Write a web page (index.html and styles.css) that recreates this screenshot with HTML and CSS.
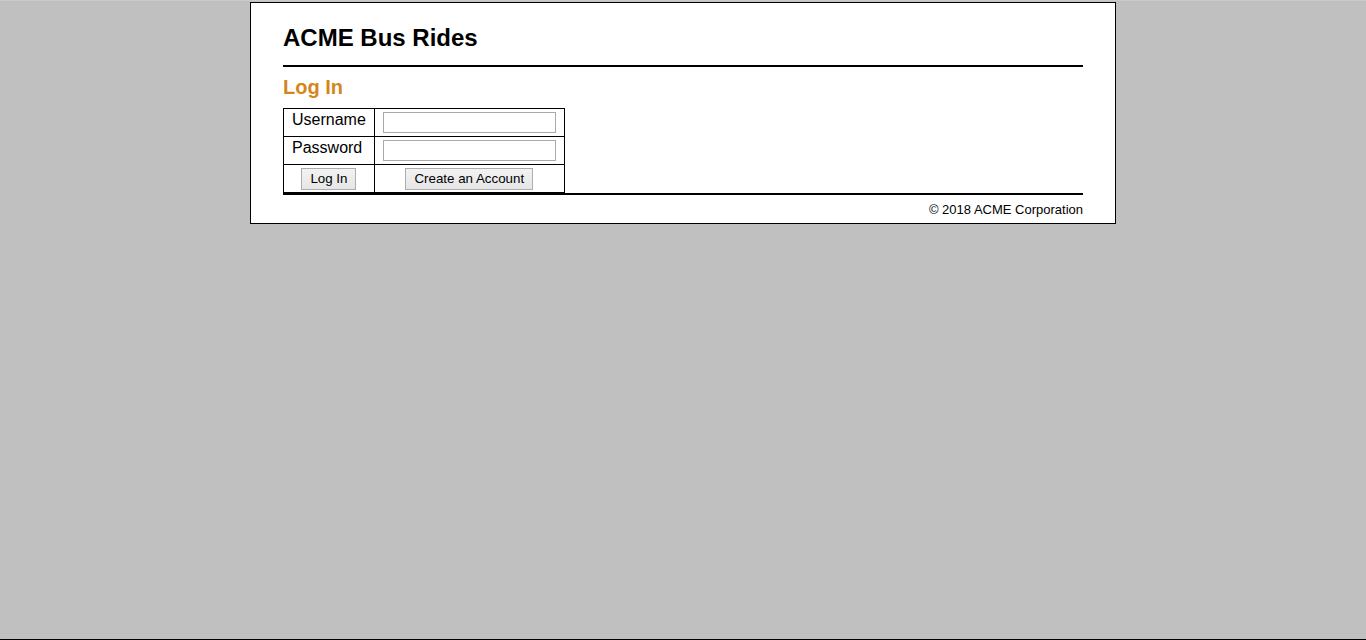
FILE: index.html
```html
<!DOCTYPE html>
<html>
<head>
<meta charset="utf-8">
<title>ACME Bus Rides - Log In</title>
<link rel="stylesheet" href="styles.css">
</head>
<body>
<div class="page">
  <div class="header">
    <h1 class="site-title">ACME Bus Rides</h1>
  </div>
  <div class="content">
    <h2 class="page-title">Log In</h2>
    <form class="login-form">
      <table class="login-table">
        <tr>
          <td class="label">Username</td>
          <td class="field"><input type="text" class="text-input"></td>
        </tr>
        <tr>
          <td class="label">Password</td>
          <td class="field"><input type="password" class="text-input"></td>
        </tr>
        <tr>
          <td class="action"><button type="button" class="btn">Log In</button></td>
          <td class="action"><button type="button" class="btn">Create an Account</button></td>
        </tr>
      </table>
    </form>
  </div>
  <div class="footer">© 2018 ACME Corporation</div>
</div>
</body>
</html>
```
FILE: styles.css
```css
html {
  background: #c0c0c0;
}
body {
  margin: 0;
  padding-top: 2px;
  min-height: 640px;
  box-sizing: border-box;
  border-top: 1px solid #c9c9c9;
  border-bottom: 1px solid #000;
  font-family: "Liberation Sans", Arial, sans-serif;
  color: #000;
}
.page {
  width: 800px;
  margin: -1px auto 0;
  padding: 0 32px 6px;
  background: #fff;
  border: 1px solid #000;
}
.header {
  border-bottom: 2px solid #000;
  padding: 20px 0 12px;
}
.site-title {
  margin: 0;
  font-size: 24px;
  line-height: 30px;
  font-weight: bold;
}
.content {
  padding-top: 9px;
}
.page-title {
  margin: 0 0 9px;
  font-size: 20px;
  line-height: 23px;
  font-weight: bold;
  color: #d4861b;
}
.login-form {
  margin: 0;
}
.login-table {
  border-collapse: collapse;
  border: 1px solid #000;
}
.login-table td {
  border: 1px solid #000;
  padding: 0 8px;
  height: 27px;
  font-size: 16px;
}
.label {
  vertical-align: top;
  line-height: 22px;
}
.field {
  vertical-align: middle;
}
.text-input {
  display: block;
  width: 173px;
  height: 21px;
  box-sizing: border-box;
  margin: 0;
  border: 1px solid #a9a9a9;
  padding: 1px 2px;
  font-family: "Liberation Sans", Arial, sans-serif;
  font-size: 13px;
}
.action {
  text-align: center;
  vertical-align: middle;
}
.btn {
  font-family: "Liberation Sans", Arial, sans-serif;
  font-size: 13.333px;
  height: 22px;
  padding: 1px 8px;
  border: 1px solid #adadad;
  background: linear-gradient(#f2f2f2, #e6e6e6);
  color: #000;
  border-radius: 0;
}
.footer {
  border-top: 2px solid #000;
  text-align: right;
  font-size: 13px;
  line-height: 14px;
  padding-top: 8px;
}
```
